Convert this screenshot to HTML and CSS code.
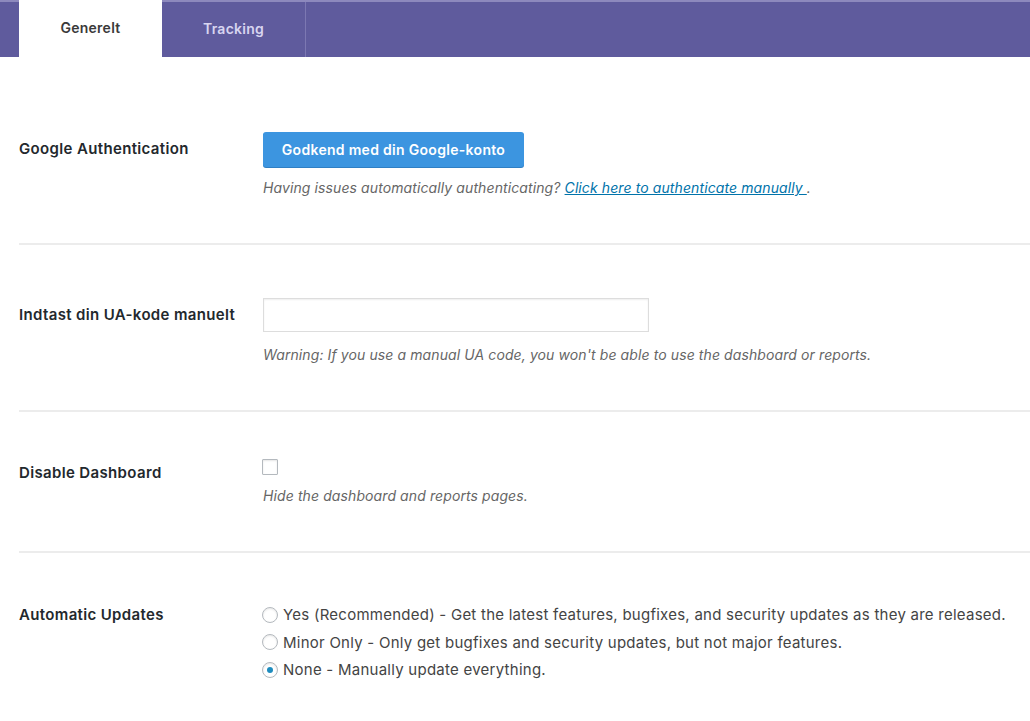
FILE: index.html
```html
<!DOCTYPE html>
<html lang="da">
<head>
<meta charset="utf-8">
<title>Indstillinger</title>
<link rel="stylesheet" href="styles.css">
</head>
<body>
<nav class="tabs">
  <span class="tab-spacer"></span>
  <a class="tab tab-active">Generelt</a>
  <a class="tab tab-inactive">Tracking</a>
</nav>
<main class="rows">
  <section class="row row-auth">
    <div class="label label-auth">Google Authentication</div>
    <div class="field">
      <button class="btn-primary">Godkend med din Google-konto</button>
      <p class="desc desc-auth">Having issues automatically authenticating? <a class="link">Click here to authenticate manually </a>.</p>
    </div>
  </section>
  <section class="row row-ua">
    <div class="label label-ua">Indtast din UA-kode manuelt</div>
    <div class="field">
      <input class="text-input" type="text">
      <p class="desc desc-ua">Warning: If you use a manual UA code, you won't be able to use the dashboard or reports.</p>
    </div>
  </section>
  <section class="row row-dash">
    <div class="label label-dash">Disable Dashboard</div>
    <div class="field">
      <input class="checkbox" type="checkbox">
      <p class="desc desc-dash">Hide the dashboard and reports pages.</p>
    </div>
  </section>
  <section class="row row-updates">
    <div class="label label-updates">Automatic Updates</div>
    <div class="field radios">
      <label class="radio-line"><input class="radio" type="radio" name="upd">Yes (Recommended) - Get the latest features, bugfixes, and security updates as they are released.</label>
      <label class="radio-line"><input class="radio" type="radio" name="upd">Minor Only - Only get bugfixes and security updates, but not major features.</label>
      <label class="radio-line"><input class="radio" type="radio" name="upd" checked>None - Manually update everything.</label>
    </div>
  </section>
</main>
</body>
</html>
```
FILE: styles.css
```css
html, body {
  margin: 0;
  padding: 0;
  background: #ffffff;
  font-family: Inter, "Liberation Sans", Arial, sans-serif;
  color: #23282d;
  overflow: hidden;
}

.tabs {
  display: flex;
  height: 55px;
  background: #5f5b9d;
  border-top: 2px solid #8d89bd;
}

.tab-spacer {
  width: 19px;
}

.tab {
  display: flex;
  align-items: center;
  justify-content: center;
  font-size: 14px;
  font-weight: 600;
  letter-spacing: 0.25px;
  text-decoration: none;
  padding-bottom: 2px;
  box-sizing: border-box;
}

.tab-active {
  width: 143px;
  background: #ffffff;
  color: #3a3a3a;
  margin-top: -2px;
}

.tab-inactive {
  width: 144px;
  color: #d8d5f0;
  border-right: 1px solid #7c78b2;
}

.rows {
  margin-left: 19px;
}

.row {
  display: grid;
  grid-template-columns: 244px 1fr;
  border-bottom: 2px solid #ececec;
}

.row-updates {
  border-bottom: none;
}

.label {
  font-size: 15px;
  font-weight: 600;
  letter-spacing: 0.35px;
  color: #23282d;
}

.row-auth { padding: 75px 0 45px; }
.row-ua { padding: 53px 0 45px; }
.row-dash { padding: 47px 0 45px; }
.row-updates { padding: 48px 0 30px; }

.label-auth { line-height: 34px; }
.label-ua { line-height: 33px; }
.label-dash { line-height: 20px; padding-top: 4px; }
.label-updates { line-height: 27px; }

.field {
  display: flex;
  flex-direction: column;
  align-items: flex-start;
}

.btn-primary {
  width: 261px;
  height: 35px;
  border: none;
  border-radius: 3px;
  background: #3c95e0;
  color: #ffffff;
  font-family: Inter, "Liberation Sans", Arial, sans-serif;
  font-size: 14px;
  font-weight: 600;
  letter-spacing: 0.3px;
  padding: 0;
  box-shadow: 0 1px 0 #2f7fc4;
}

.desc {
  margin: 0;
  font-size: 14px;
  line-height: 20px;
  font-style: italic;
  letter-spacing: 0.1px;
  color: #666666;
}

.desc-auth { margin-top: 11px; }
.desc-ua { margin-top: 13px; }
.desc-dash { margin-top: 11px; }

.link {
  color: #0073aa;
  text-decoration: underline;
}

.text-input {
  width: 386px;
  height: 34px;
  box-sizing: border-box;
  border: 1px solid #dddddd;
  box-shadow: inset 0 1px 2px rgba(0, 0, 0, 0.07);
  margin: 0;
  padding: 0 8px;
}

.checkbox {
  appearance: none;
  -webkit-appearance: none;
  width: 16px;
  height: 16px;
  margin: 0 0 0 -1px;
  border: 1px solid #b4b9be;
  border-radius: 1px;
  background: #ffffff;
  box-shadow: inset 0 1px 2px rgba(0, 0, 0, 0.1);
}

.radios {
  gap: 0;
}

.radio-line {
  display: flex;
  align-items: center;
  font-size: 15px;
  line-height: 27.5px;
  letter-spacing: 0.25px;
  color: #444444;
}

.radio {
  appearance: none;
  -webkit-appearance: none;
  width: 16px;
  height: 16px;
  margin: 0 5px 0 -1px;
  border: 1px solid #b4b9be;
  border-radius: 50%;
  background: #ffffff;
  box-shadow: inset 0 1px 2px rgba(0, 0, 0, 0.1);
  display: flex;
  align-items: center;
  justify-content: center;
  flex: none;
}

.radio:checked::before {
  content: "";
  width: 6px;
  height: 6px;
  border-radius: 50%;
  background: #1e8cbe;
}
```
